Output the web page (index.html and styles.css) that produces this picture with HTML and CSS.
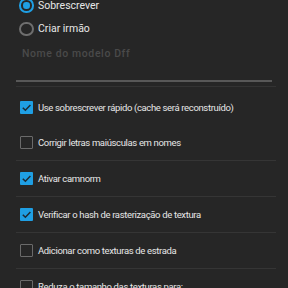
FILE: index.html
```html
<!DOCTYPE html>
<html lang="pt">
<head>
  <meta charset="UTF-8" />
  <title>Importar modelo</title>
  <link rel="stylesheet" href="styles.css">
</head>
<body>
  <div class="dialog">
    <div class="radios">
      <div class="radio-row">
        <span class="radio checked"></span>
        <span class="label">Sobrescrever</span>
      </div>
      <div class="radio-row">
        <span class="radio"></span>
        <span class="label">Criar irmão</span>
      </div>
    </div>
    <div class="field">
      <div class="placeholder">Nome do modelo Dff</div>
      <div class="underline"></div>
    </div>
    <div class="sep"></div>
    <div class="options">
      <div class="opt">
        <span class="box checked"><svg viewBox="0 0 14 14"><path d="M3 7.2l2.8 2.8L11.2 4.4" /></svg></span>
        <span class="label">Use sobrescrever rápido (cache será reconstruído)</span>
      </div>
      <div class="opt">
        <span class="box"></span>
        <span class="label">Corrigir letras maiúsculas em nomes</span>
      </div>
      <div class="opt divided">
        <span class="box checked"><svg viewBox="0 0 14 14"><path d="M3 7.2l2.8 2.8L11.2 4.4" /></svg></span>
        <span class="label">Ativar camnorm</span>
      </div>
      <div class="opt divided">
        <span class="box checked"><svg viewBox="0 0 14 14"><path d="M3 7.2l2.8 2.8L11.2 4.4" /></svg></span>
        <span class="label">Verificar o hash de rasterização de textura</span>
      </div>
      <div class="opt divided">
        <span class="box"></span>
        <span class="label">Adicionar como texturas de estrada</span>
      </div>
      <div class="opt divided">
        <span class="box"></span>
        <span class="label">Reduza o tamanho das texturas para:</span>
      </div>
    </div>
  </div>
</body>
</html>
```

FILE: styles.css
```css
body {
  margin: 0;
  background: #262626;
  color: #e6e6e6;
  font-family: Roboto, "Noto Sans", Arial, sans-serif;
  font-size: 9.5px;
  height: 288px;
  overflow: hidden;
}
.dialog {
  padding: 0 12px 0 16px;
}
.radios {
  margin-top: -6.5px;
  padding-left: 3px;
}
.radio-row {
  height: 23.5px;
  display: flex;
  align-items: center;
  font-size: 10.5px;
}
.radio {
  width: 10.5px;
  height: 10.5px;
  border: 2px solid #6e6e6e;
  border-radius: 50%;
  margin-right: 4.5px;
  position: relative;
}
.radio.checked {
  border-color: #1f9fe4;
}
.radio.checked::after {
  content: "";
  position: absolute;
  left: 2px;
  top: 2px;
  width: 6.5px;
  height: 6.5px;
  border-radius: 50%;
  background: #1f9fe4;
}
.field {
  padding-left: 6px;
  padding-top: 6.5px;
}
.placeholder {
  color: #4a4a4a;
  font-weight: 500;
  font-size: 10.5px;
  letter-spacing: 0.6px;
  height: 14px;
  line-height: 14px;
}
.underline {
  margin: 19px 4px 0 -6px;
  height: 1.5px;
  background: #585858;
}
.sep {
  margin-top: 4.5px;
  height: 1px;
  background: #333;
}
.options {
  margin-top: 2.25px;
}
.opt {
  height: 35.5px;
  box-sizing: border-box;
  display: flex;
  align-items: center;
  padding-left: 4px;
}
.opt.divided {
  border-top: 1px solid #353535;
  height: 36px;
}
.box {
  width: 13px;
  height: 13px;
  box-sizing: border-box;
  border: 1.5px solid #6a6a6a;
  border-radius: 1px;
  margin-right: 5px;
  display: flex;
}
.box.checked {
  border: none;
  background: #1f9fe4;
}
.box svg {
  width: 13px;
  height: 13px;
  fill: none;
  stroke: #1d2a33;
  stroke-width: 1.6;
}
.label {
  white-space: nowrap;
  letter-spacing: -0.35px;
}
.radio-row .label {
  letter-spacing: 0;
}
```
